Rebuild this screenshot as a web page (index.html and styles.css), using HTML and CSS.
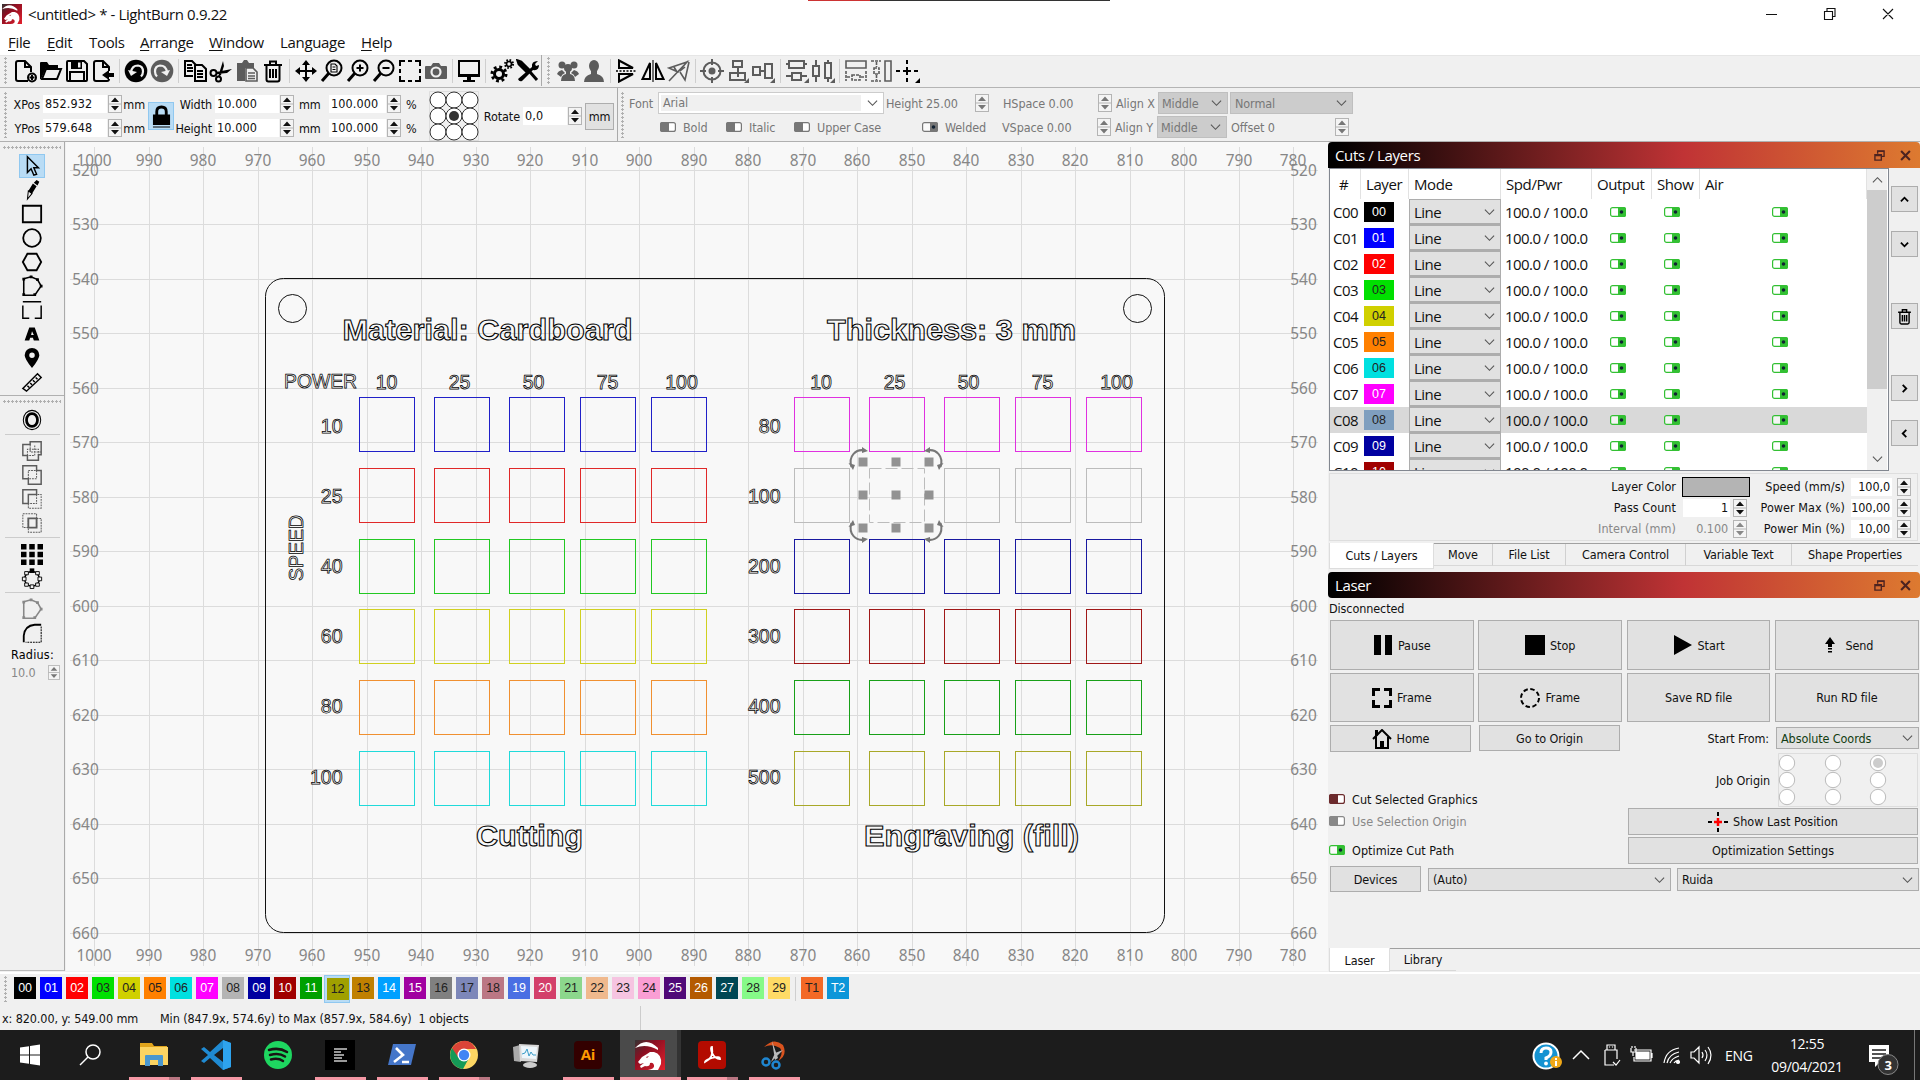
FILE: index.html
```html
<!DOCTYPE html>
<html lang="en">
<head>
<meta charset="utf-8">
<title>LightBurn</title>
<link rel="stylesheet" href="styles.css">
</head>
<body>
<svg class="sprite" aria-hidden="true">
  <defs>
    <symbol id="spin" viewBox="0 0 14 18"><rect x=".5" y=".5" width="13" height="17" fill="#f4f4f4" stroke="#b4b4b4"/><path d="M0 9h14" stroke="#b4b4b4"/><path d="M3 7l4-4.6L11 7zM3 11l4 4.600L11 11z" fill="currentColor"/></symbol>
    <symbol id="chev" viewBox="0 0 12 8"><path d="M1 1.500l5 5 5-5" fill="none" stroke="#555" stroke-width="1.200"/></symbol>
    <symbol id="on" viewBox="0 0 16 10"><rect x=".6" y=".6" width="14.800" height="8.800" rx="2" fill="#fff" fill-opacity=".7" stroke="currentColor" stroke-width="1.200"/><path d="M8 0h6a2 2 0 012 2v6a2 2 0 01-2 2H8z" fill="currentColor"/><circle cx="11.500" cy="5" r="1.800" fill="#123"/></symbol>
    <symbol id="off" viewBox="0 0 16 10"><rect x=".6" y=".6" width="14.800" height="8.800" rx="2" fill="#fff" stroke="currentColor" stroke-width="1.200"/><path d="M9 0H2a2 2 0 00-2 2v6a2 2 0 002 2h7z" fill="currentColor"/></symbol>
    <symbol id="trash" viewBox="0 0 24 24"><path d="M3 6h18M9 5V2.500h6V5M5.500 7v13.500q0 2 2 2h9q2 0 2-2V7M9 10v9M12 10v9M15 10v9" fill="none" stroke="currentColor" stroke-width="2"/></symbol>
    <symbol id="float" viewBox="0 0 12 12"><path d="M4 4V1h7v6H8" fill="none" stroke="currentColor" stroke-width="1.500"/><path d="M1 5h7v6H1zM1 6h7M4 1.500h7" fill="none" stroke="currentColor" stroke-width="1.500"/></symbol>
    <symbol id="x" viewBox="0 0 10 10"><path d="M1 1l8 8M9 1L1 9" stroke="currentColor" stroke-width="1.900"/></symbol>
    <symbol id="poly" viewBox="0 0 24 24"><path d="M3 4l8-2 7 3 4 7-7 10H3z" fill="none" stroke="currentColor" stroke-width="1.700"/><path d="M1.500 3h3v3h-3zM9.500 .5h3v3h-3zM16.500 3.500h3v3h-3zM20.500 10.500h3v3h-3zM13.500 20h3v3h-3zM1.500 20h3v3h-3z" fill="currentColor"/></symbol>
    <symbol id="dragon" viewBox="0 0 30 30"><path d="M0 0h30v30H0z" fill="url(#dg)"/><path d="M0 8Q11-4 23 8v2Q11 3 0 8z" fill="#fff"/><path d="M3 22l4-5 5-3 3-2 4 0q8 2 7 12l-3 6H13q7-1 6-5-1-3-4-2 0 4-5 3l-4 2-1-2 4-3-4 1z" fill="#fff"/><path d="M11 17l3-1-2 2z" fill="#a01020"/></symbol>
    <symbol id="undo" viewBox="0 0 24 24"><circle cx="12" cy="12" r="11.300" fill="currentColor"/><path d="M4 11l3 6 6-4z" fill="#f0f0f0"/><path d="M7 13q1-6.500 7-6.500 5 .5 5 6 0 3-2 5" fill="none" stroke="#f0f0f0" stroke-width="2.200"/></symbol>
    <linearGradient id="dg" x2="1" y2="1"><stop stop-color="#333"/><stop offset=".35" stop-color="#8a0f22"/><stop offset="1" stop-color="#e3202c"/></linearGradient>
  </defs>
</svg>

<header class="titlebar">
  <svg class="logo"><use href="#dragon"/></svg>
  <span class="caption">&lt;untitled&gt; * - LightBurn 0.9.22</span>
  <i class="top-strip"></i>
  <svg class="winbtns" viewBox="0 0 180 28" fill="none" stroke="#111" stroke-width="1.100"><path d="M26 14.500h11M84.500 11.500h8v8h-8zM87 11V8.500h8v8h-2.500M143 9l10 10M153 9l-10 10"/></svg>
</header>
<nav class="menubar"><span class="m1"><u>F</u>ile</span><span class="m2"><u>E</u>dit</span><span class="m3">Tools</span><span class="m4"><u>A</u>rrange</span><span class="m5"><u>W</u>indow</span><span class="m6">Language</span><span><u>H</u>elp</span></nav>

<div class="toolbar">
  <i class="grip"></i>
  <svg viewBox="0 0 24 24"><path d="M15 22H5q-2 0-2-2V4q0-2 2-2h7l6 6v5M12 2v6h6" class="s"/><circle cx="19" cy="18.500" r="4" class="s"/><path d="M19 16v5M16.500 18.500h5" class="s"/></svg>
  <svg viewBox="0 0 24 24"><path d="M1 20V4q0-1 1-1h6l2 3h9v3H7L2 20z"/><path d="M7 10h15l-4 10H3z" class="s"/></svg>
  <svg viewBox="0 0 24 24"><path d="M3 2h16l3 3v16q0 1-1 1H3q-1 0-1-1V3q0-1 1-1z" class="s"/><path d="M6 2h11v8H6z"/><path d="M13 3.500h2.500v5H13z" fill="#eee"/><path d="M5 22v-9h14v9" class="s"/></svg>
  <svg viewBox="0 0 24 24"><path d="M18 12V8l-6-6H5Q3 2 3 4v16q0 2 2 2h11q2 0 2-2M12 2v6h6" class="s"/><path d="M11 16l7-5v3h5v4h-5v3z"/></svg>
  <i class="sep"></i>
  <svg><use href="#undo"/></svg>
  <svg class="dim flip"><use href="#undo"/></svg>
  <i class="sep"></i>
  <svg viewBox="0 0 24 24"><path d="M10 17H2V2h7l4 4M12 6h7l4 4v12H12zM4 6h5M4 9h6M4 12h6M14 12h6M14 15h6M14 18h6" class="s"/></svg>
  <svg viewBox="0 0 24 24"><circle cx="4.500" cy="14" r="3" class="s"/><circle cx="9.500" cy="20" r="2.500" class="s"/><path d="M7 13l16-3-5 4-10 1zM9 18l5-16 1 5-3 9z"/></svg>
  <svg viewBox="0 0 24 24" class="dim"><path d="M2 4h5l2-3h3l2 3h5v5h-9v13H2z"/><path d="M11 9h7l4 4v9H11zM13 14h7M13 17h7M13 19.500h7" class="s t2"/></svg>
  <svg><use href="#trash"/></svg>
  <i class="sep"></i>
  <svg viewBox="0 0 24 24"><path d="M12 1l4 5h-3v5h5V8l5 4-5 4v-3h-5v5h3l-4 5-4-5h3v-5H6v3l-5-4 5-4v3h5V6H8z"/></svg>
  <svg viewBox="0 0 24 24"><circle cx="14" cy="9" r="7.500" class="s"/><path d="M9 14l-7 8" class="s b"/><path d="M11 5h4l2 2v6h-6zM12.500 8h3M12.500 10.500h3" class="s t"/></svg>
  <svg viewBox="0 0 24 24"><circle cx="14" cy="9" r="7.500" class="s"/><path d="M9 14l-7 8" class="s b"/><path d="M14 5.500v7M10.500 9h7" class="s"/></svg>
  <svg viewBox="0 0 24 24"><circle cx="14" cy="9" r="7.500" class="s"/><path d="M9 14l-7 8" class="s b"/><path d="M10.500 9h7" class="s"/></svg>
  <svg viewBox="0 0 24 24"><path d="M2 7V2h5M10 2h4M17 2h5v5M22 10v4M22 17v5h-5M14 22h-4M7 22H2v-5M2 14v-4" class="s"/></svg>
  <svg viewBox="0 0 24 24" class="dim"><path d="M2 7h5l2-3h6l2 3h5q1 0 1 1v11q0 1-1 1H2q-1 0-1-1V8q0-1 1-1z"/><circle cx="12" cy="13" r="4.500" class="s w"/></svg>
  <i class="sep"></i>
  <svg viewBox="0 0 24 24"><path d="M2 2h20v15H2z" class="s"/><path d="M2 15h20v2H2zM10 17h4v4h4v2H6v-2h4z"/></svg>
  <i class="sep"></i>
  <svg viewBox="0 0 24 24"><circle cx="9" cy="15" r="4.500" class="s b"/><circle cx="9" cy="15" r="7" class="s b" stroke-dasharray="2.800 2.700"/><circle cx="19" cy="5" r="2.500" class="s t2"/><circle cx="19" cy="5" r="4" class="s" stroke-dasharray="1.600 1.550"/></svg>
  <svg viewBox="0 0 24 24"><path d="M2 2l3 1 8 8-2 2-8-8zM14 13l7 8" class="s b"/><path d="M16 8q-1-6 6-6l-3 3 1 2 3-1q0 6-6 5L6 22q-3 1-4-2z"/></svg>
  <i class="split"></i><i class="grip"></i>
  <svg viewBox="0 0 24 24" class="dim"><circle cx="6" cy="6" r="3.500"/><circle cx="18" cy="6" r="3.500"/><circle cx="12" cy="9" r="4"/><path d="M1 15q1-3 5-4l3 3q-3 1-4 4zM23 15q-1-3-5-4l-3 3q3 1 4 4zM5 22q0-6 5-7v-3h4v3q5 1 5 7z"/></svg>
  <svg viewBox="0 0 24 24" class="dim"><ellipse cx="12" cy="7" rx="5" ry="6"/><path d="M2 23q0-6 7-8v-4h6v4q7 2 7 8z"/></svg>
  <i class="sep"></i>
  <svg viewBox="0 0 24 24"><path d="M4 1.500L18 9H4zM4 22.500L18 15H4z" class="s"/><path d="M1 12h20" class="s t2" stroke-dasharray="2 1.500"/></svg>
  <svg viewBox="0 0 24 24"><path d="M9 4v16H1.500zM15 4v16h7.500z" class="s"/><path d="M12 1v22" class="s t"/></svg>
  <svg viewBox="0 0 24 24" class="dim"><path d="M2 9l18-6-9 10zM22 3l-4 18-5-8M2 22L21 2M7 8l3 5M18 8l-5 4" class="s t2"/></svg>
  <i class="sep"></i>
  <svg viewBox="0 0 24 24" class="dim"><circle cx="12" cy="12" r="8.500" class="s"/><circle cx="12" cy="12" r="3.500"/><path d="M12 0v6M12 18v6M0 12h6M18 12h6" class="s"/></svg>
  <svg viewBox="0 0 24 24" class="dim"><path d="M7 2h9v6H7zM12 8v6M4 14h15v7H4zM12 10v8" class="s"/><path d="M23 19v5h-5z"/></svg>
  <svg viewBox="0 0 24 24" class="dim"><path d="M1 8h7v8H1zM8 12h5M13 5h7v14h-7z" class="s"/><path d="M23 19v5h-5z"/></svg>
  <i class="sep"></i>
  <svg viewBox="0 0 24 24" class="dim"><path d="M4 2h15v7H4zM1 5h3M19 5h3M7 14h9v7H7zM1 17h6M16 17h6" class="s"/><path d="M24 19v5h-5z"/></svg>
  <svg viewBox="0 0 24 24" class="dim"><path d="M2 7h6v10H2zM5 1v6M5 17v6M14 4h6v15h-6zM17 1v3M17 19v4" class="s"/><path d="M24 19v5h-5z"/></svg>
  <i class="sep"></i>
  <svg viewBox="0 0 24 24" class="dim"><path d="M2 2h20v7H2z" class="s t2"/><path d="M2 12v10M22 12v10M8 16h8v5H8zM3 18h4M17 18h4" class="s t2" stroke-dasharray="3 1"/></svg>
  <svg viewBox="0 0 24 24" class="dim"><path d="M15 2h6v20h-6z" class="s t2"/><path d="M1 2h10M1 22h10M4 9h5v6H4zM6.500 3v5M6.500 16v5" class="s t2" stroke-dasharray="3 1"/></svg>
  <svg viewBox="0 0 24 24"><path d="M11 1v4M11 8v8M11 19v4M0 12h4M7 12h8M18 12h4" class="s"/><path d="M24 19v5h-5z"/></svg>
</div>

<div class="propbar">
  <i class="grip"></i>
  <div class="posgrid">
    <label>XPos</label><b class="in">852.932</b><svg class="spin"><use href="#spin"/></svg><label>mm</label>
    <span class="lock"><svg viewBox="0 0 20 24"><path d="M1 10h18v11H1zM1 22.500h18v1H1z"/><path d="M5 11V7q0-5 5-5t5 5v4" class="s b"/></svg></span>
    <label>Width</label><b class="in">10.000</b><svg class="spin"><use href="#spin"/></svg><label class="l">mm</label><b class="in">100.000</b><svg class="spin"><use href="#spin"/></svg><label class="l">%</label>
    <svg class="anchor" viewBox="0 0 50 50"><path d="M.5 .5h49v49H.5z" fill="none" stroke="#ddd"/><g fill="#fff" stroke="#333"><circle cx="9" cy="9" r="8"/><circle cx="25" cy="9" r="8"/><circle cx="41" cy="9" r="8"/><circle cx="9" cy="25" r="8"/><circle cx="25" cy="25" r="8"/><circle cx="41" cy="25" r="8"/><circle cx="9" cy="41" r="8"/><circle cx="25" cy="41" r="8"/><circle cx="41" cy="41" r="8"/></g><circle cx="25" cy="25" r="5" fill="#333"/></svg>
    <label class="tall k14">Rotate</label><b class="in tall k15">0,0</b><svg class="spin tall k16"><use href="#spin"/></svg><button class="tall k17">mm</button>
    <label>YPos</label><b class="in">579.648</b><svg class="spin"><use href="#spin"/></svg><label>mm</label>
    <label>Height</label><b class="in">10.000</b><svg class="spin"><use href="#spin"/></svg><label class="l">mm</label><b class="in">100.000</b><svg class="spin"><use href="#spin"/></svg><label class="l">%</label>
  </div>
  <div class="fontbar">
    <i class="grip"></i>
    <div class="frows">
      <div class="frow"><span class="f-font">Font</span><span class="combo font"><em>Arial</em><svg class="chev"><use href="#chev"/></svg></span><span class="f-h">Height 25.00</span><svg class="spin"><use href="#spin"/></svg><span class="f-s">HSpace 0.00</span><svg class="spin"><use href="#spin"/></svg><span class="f-a">Align X</span><span class="combo mid">Middle<svg class="chev"><use href="#chev"/></svg></span><span class="combo norm">Normal<svg class="chev"><use href="#chev"/></svg></span></div>
      <div class="frow"><span class="c1"><svg class="tg"><use href="#off"/></svg>Bold</span><span class="c2"><svg class="tg"><use href="#off"/></svg>Italic</span><span class="c3"><svg class="tg"><use href="#off"/></svg>Upper Case</span><span class="c4"><svg class="tg"><use href="#on"/></svg>Welded</span><span class="f-s v">VSpace 0.00</span><svg class="spin"><use href="#spin"/></svg><span class="f-a">Align Y</span><span class="combo mid">Middle<svg class="chev"><use href="#chev"/></svg></span><span class="f-o">Offset 0</span><svg class="spin"><use href="#spin"/></svg></div>
    </div>
  </div>
</div>

<main class="work">
  <aside class="tools">
    <i class="hgrip"></i>
    <svg class="sel" viewBox="0 0 24 24"><path d="M7 2v17l4-4 3 7 3-1-3-7h5z" class="s t2"/></svg>
    <svg viewBox="0 0 24 24"><path d="M14 4l3-3 3 2-2 4zM13 5l4 3-5 8-4-3z"/><path d="M8 13l4 3-5 6z" class="s t"/></svg>
    <svg viewBox="0 0 24 24"><path d="M2 3h20v18H2z" class="s"/></svg>
    <svg viewBox="0 0 24 24"><circle cx="12" cy="12" r="9.600" class="s"/></svg>
    <svg viewBox="0 0 24 24"><path d="M7 3h10l5 9-5 9H7l-5-9z" class="s"/></svg>
    <svg><use href="#poly"/></svg>
    <svg viewBox="0 0 24 24"><path d="M2 3h20M2 7v14h7M22 7v14h-7" class="s t2"/></svg>
    <svg viewBox="0 0 24 24"><path fill-rule="evenodd" d="M9 5h6l5 14h-6l-1-3h-3l-1 3H4zM12 9l-1 4h3z"/></svg>
    <svg viewBox="0 0 24 24"><path fill-rule="evenodd" d="M12 23Q4 13 4 9a8 8 0 0116 0Q20 13 12 23zM12 6a3 3 0 100 6 3 3 0 000-6z"/></svg>
    <svg viewBox="0 0 24 24"><path d="M2 19L18 3l4 4L6 22zM7 16l2 2M10 13l2 2M13 10l2 2M16 7l2 2" class="s t2"/></svg>
    <i class="hline"></i><i class="hgrip"></i>
    <svg class="o" viewBox="0 0 24 24"><ellipse cx="12" cy="12" rx="9.500" ry="10.500" class="s t"/><ellipse cx="12" cy="12" rx="6" ry="7" class="s b"/></svg>
    <i class="hsep"></i>
    <svg class="dim" viewBox="0 0 24 24"><path d="M2 5h8V2h12v14h-3v6H7v-5H2z" class="s t2"/><path d="M10 5v8h12M7 17v-7h12v12M3 17h12V5" class="s t" stroke-dasharray="2 1"/></svg>
    <svg class="dim" viewBox="0 0 24 24"><path d="M2 2h15v5h5v15H8v-6H2z" class="s t2"/><path d="M8 16V7h9v9z" class="s t" stroke-dasharray="2 1"/></svg>
    <svg class="dim" viewBox="0 0 24 24"><path d="M2 2h15v5H8v10H2z" class="s t2"/><path d="M8 17v5h14V7h-5v10H8" class="s t" stroke-dasharray="2 1"/></svg>
    <svg class="dim" viewBox="0 0 24 24"><path d="M8 7h9v10H8z" class="s"/><path d="M2 2h15v15H2zM8 7h14v15H8z" class="s t" stroke-dasharray="2 1"/></svg>
    <i class="hsep"></i>
    <svg viewBox="0 0 24 24"><path d="M0 1h6v6H0zM9 1h6v6H9zM18 1h6v6h-6zM0 9.500h6v6H0zM9 9.500h6v6H9zM18 9.500h6v6h-6zM0 18h6v6H0zM9 18h6v6H9zM18 18h6v6h-6z"/></svg>
    <svg viewBox="0 0 24 24"><circle cx="12" cy="13" r="8" class="s t2"/><g fill="#f0f0f0" stroke="#000"><path d="M18.500 11h4v4h-4zM1.500 11h4v4h-4zM10 19.500h4v4h-4zM4 5h4v3.500H4zM16 5h4v3.500h-4zM4 17.500h4V21H4zM16 17.500h4V21h-4z"/></g><path d="M9.500 1.500h5v5h-5z"/></svg>
    <i class="hsep"></i>
    <svg class="dim2"><use href="#poly"/></svg>
    <svg viewBox="0 0 24 24"><path d="M3 22v-7Q4 4 15 3h7" class="s"/><path d="M22 5v17H5" class="s t" stroke-dasharray="2 1"/></svg>
    <span class="radius">Radius:</span>
    <div class="radval"><span>10.0</span><svg class="spin"><use href="#spin"/></svg></div>
  </aside>

  <section class="canvas"><svg id="stage" viewBox="66 142 1262 829"></svg></section>

  <section class="docks">
    <div class="dockhead"><span>Cuts / Layers</span><svg><use href="#float"/></svg><svg class="cx"><use href="#x"/></svg></div>
    <div class="cuts">
      <div class="tablebox">
        <div class="table" id="layers">
          <div class="thead"><span class="hash">#</span><span>Layer</span><span>Mode</span><span>Spd/Pwr</span><span>Output</span><span>Show</span><span>Air</span></div>
        </div>
        <div class="scroll"><svg class="chev up"><use href="#chev"/></svg><i></i><svg class="chev"><use href="#chev"/></svg></div>
      </div>
      <div class="sidebtns">
        <button><svg viewBox="0 0 10 10"><path d="M1 7l4-4 4 4" class="s"/></svg></button>
        <button><svg viewBox="0 0 10 10"><path d="M1 3l4 4 4-4" class="s"/></svg></button>
        <button class="tr"><svg><use href="#trash"/></svg></button>
        <button><svg viewBox="0 0 10 10"><path d="M3 1l4 4-4 4" class="s"/></svg></button>
        <button><svg viewBox="0 0 10 10"><path d="M7 1L3 5l4 4" class="s"/></svg></button>
      </div>
    </div>
    <div class="params">
      <label>Layer Color</label><i class="colour"></i><label>Speed (mm/s)</label><b class="in">100,0</b><svg class="spin"><use href="#spin"/></svg>
      <label>Pass Count</label><span class="pc"><b class="in">1</b><svg class="spin"><use href="#spin"/></svg></span><label>Power Max (%)</label><b class="in">100,00</b><svg class="spin"><use href="#spin"/></svg>
      <label class="off">Interval (mm)</label><span class="pc off"><b class="in">0.100</b><svg class="spin"><use href="#spin"/></svg></span><label>Power Min (%)</label><b class="in">10,00</b><svg class="spin"><use href="#spin"/></svg>
    </div>
    <div class="tabs top"><span class="act">Cuts / Layers</span><span>Move</span><span>File List</span><span>Camera Control</span><span>Variable Text</span><span>Shape Properties</span></div>
    <div class="dockhead second"><span>Laser</span><svg><use href="#float"/></svg><svg class="cx"><use href="#x"/></svg></div>
    <div class="status">Disconnected</div>
    <div class="big">
      <button><svg viewBox="0 0 20 20"><path d="M1 0h7v20H1zM12 0h7v20h-7z"/></svg>Pause</button>
      <button><svg viewBox="0 0 20 20"><path d="M0 0h20v20H0z"/></svg>Stop</button>
      <button><svg viewBox="0 0 20 20"><path d="M1 0l18 10L1 20z"/></svg>Start</button>
      <button><svg viewBox="0 0 20 20"><path d="M10 2l5 7h-3v3H8V9H5zM8 13h4v1.500H8zM8 16h4v1.500H8z"/></svg>Send</button>
      <button><svg viewBox="0 0 20 20"><path d="M1.500 8V1.500H8M12 1.500h6.500V8M18.500 12v6.500H12M8 18.500H1.500V12" class="s b"/></svg>Frame</button>
      <button><svg viewBox="0 0 20 20"><circle cx="10" cy="10" r="9" class="s" stroke-dasharray="4.500 2.570"/></svg>Frame</button>
      <button>Save RD file</button><button>Run RD file</button>
    </div>
    <div class="homerow"><button><svg viewBox="0 0 20 20"><path d="M1 10l9-9 9 9M4 8v11h12V8" class="s"/><path d="M8 19v-7h4v7zM3 1h3v5l-3 3z"/></svg>Home</button><button class="go">Go to Origin</button><label>Start From:</label><span class="combo abs">Absolute Coords<svg class="chev"><use href="#chev"/></svg></span></div>
    <div class="lower">
      <div class="checks"><span><svg class="tg red"><use href="#off"/></svg>Cut Selected Graphics</span><span class="offc"><svg class="tg"><use href="#off"/></svg>Use Selection Origin</span><span class="oc"><svg class="tg green"><use href="#on"/></svg>Optimize Cut Path</span></div>
      <div class="rightcol">
        <div class="job"><label>Job Origin</label><svg viewBox="0 0 140 54"><path d="M.5 .5h139v53H.5z" fill="none" stroke="#ddd"/><g fill="#fff" stroke="#bbb"><circle cx="9" cy="10" r="7.700"/><circle cx="55" cy="10" r="7.700"/><circle cx="100" cy="10" r="7.700"/><circle cx="9" cy="27" r="7.700"/><circle cx="55" cy="27" r="7.700"/><circle cx="100" cy="27" r="7.700"/><circle cx="9" cy="44" r="7.700"/><circle cx="55" cy="44" r="7.700"/><circle cx="100" cy="44" r="7.700"/></g><circle cx="100" cy="10" r="5" fill="#ccc"/></svg></div>
        <button><svg viewBox="0 0 20 20"><path d="M10 0v4M10 16v4M0 10h4M16 10h4" class="s"/><path d="M10 6v8M6 10h8" stroke="#f00" stroke-width="2.500"/></svg>Show Last Position</button>
        <button class="opt">Optimization Settings</button>
      </div>
    </div>
    <div class="devrow"><button>Devices</button><span class="combo auto">(Auto)<svg class="chev"><use href="#chev"/></svg></span><span class="combo rui">Ruida<svg class="chev"><use href="#chev"/></svg></span></div>
    <div class="tabs bot"><span class="act">Laser</span><span>Library</span></div>
  </section>
</main>

<div class="palette" id="palette"><i class="grip"></i></div>
<footer class="statusbar"><span class="xy">x: 820.00, y: 549.00 mm</span><span class="mm">Min (847.9x, 574.6y) to Max (857.9x, 584.6y)&nbsp; 1 objects</span></footer>

<div class="taskbar">
  <span class="w60"><svg viewBox="0 0 30 30" fill="#fff"><path d="M5 7.500l9-1.300v8.300H5zM15 6l10-1.500v10H15zM5 15.500h9v8.300l-9-1.300zM15 15.500h10v10L15 24z"/></svg></span>
  <span class="w60 gap"><svg viewBox="0 0 30 30" fill="none" stroke="#fff" stroke-width="1.500"><circle cx="18" cy="12" r="7"/><path d="M13 17l-8 8"/></svg></span>
  <span class="run two"><svg viewBox="0 0 30 30"><path d="M1 3h12l2 3h13v19H1z" fill="#e0a41c"/><path d="M1 7h28v18H1z" fill="#fcd462"/><path d="M6 26V16q0-1 1-1h16q1 0 1 1v10h-5v-6h-8v6z" fill="#4a97cf"/></svg></span>
  <span class="run"><svg viewBox="0 0 30 30"><path d="M22 0l8 3v24l-8 3L9 18l-6 5-3-2 7-6-7-6 3-2 6 5zM22 8l-9 7 9 7z" fill="#1f8ad2" fill-rule="evenodd"/><path d="M22 0l8 3v24l-8 3z" fill="#2ea3ee"/></svg></span>
  <span><svg viewBox="0 0 30 30"><circle cx="15" cy="15" r="14" fill="#1ed760"/><path d="M6 10q10-3 18 2M7 15q9-2.500 15 1.500M8 19.500q7-2 12 1.500" fill="none" stroke="#191414" stroke-width="2.500" stroke-linecap="round"/></svg></span>
  <span class="run"><svg viewBox="0 0 30 30"><path d="M0 0h30v30H0z" fill="#000"/><path d="M9 9h13M9 12h7M9 15h10M9 18h8M9 21h13" stroke="#ccc" stroke-width="1.500"/></svg></span>
  <span class="run"><svg viewBox="0 0 30 30"><path d="M6 4h23l-5 21H1z" fill="#4576c9"/><path d="M9 8l7 7-9 7M15 22h7" fill="none" stroke="#fff" stroke-width="2.600"/></svg></span>
  <span class="run two"><svg viewBox="0 0 30 30"><circle cx="15" cy="15" r="14" fill="#fdd663"/><path d="M3 8a14 14 0 0011 21l6-11z" fill="#159a57"/><path d="M3 8l6 9 5-8h13Q22-1 13 1 6 3 3 8z" fill="#db4437"/><circle cx="15" cy="15" r="6.500" fill="#fff"/><circle cx="15" cy="15" r="5.200" fill="#4285f4"/></svg></span>
  <span><svg viewBox="0 0 30 30"><path d="M2 7l7-2 1 17-7-1z" fill="#aaa"/><path d="M8 4l20 1-2 17-17-1z" fill="#d8d8d8"/><path d="M10 6l16 1-1 12-14-1z" fill="#eef6fb"/><path d="M11 14l3-1 2-4 2 7 2-4 2 3h3" fill="none" stroke="#3a9cc8"/><ellipse cx="19" cy="25" rx="7" ry="3" fill="#ccc"/></svg></span>
  <span class="run"><svg viewBox="0 0 30 30"><rect x="1" y="1" width="28" height="28" rx="4" fill="#330000"/><text x="15" y="20" class="ai">Ai</text></svg></span>
  <span class="run live"><svg><use href="#dragon"/></svg></span>
  <span class="run two"><svg viewBox="0 0 30 30"><rect x="1" y="1" width="28" height="28" rx="4" fill="#b30b00"/><path d="M8 22q9-4 7-15-2 0 0 6 3 6 8 6 0-3-8-1-7 2-7 4z" fill="none" stroke="#fff" stroke-width="1.800"/></svg></span>
  <span class="run"><svg viewBox="0 0 30 30"><path d="M5 7Q15-3 24 5q5 10-5 16 6-8 2-13Q13 3 5 7z" fill="#d9531e"/><path d="M13 1l6 17-3 2zM24 10L12 22l4-9z" fill="#bbb"/><circle cx="7" cy="22" r="3.500" fill="none" stroke="#1f86d0" stroke-width="2.500"/><circle cx="17" cy="25" r="3.500" fill="none" stroke="#1f86d0" stroke-width="2.500"/></svg></span>
  <div class="tray">
    <svg class="icons" viewBox="0 0 190 50" fill="none" stroke="#fff" stroke-width="1.200"><circle cx="17" cy="26" r="12.500" fill="#1593d2" stroke-width="2"/><path d="M12 23q0-5 5-5t5 4-5 6v2" stroke-width="3"/><circle cx="17" cy="33.500" r="1.900" fill="#fff" stroke="none"/><circle cx="27" cy="32" r="6" fill="#f0a818" stroke="none"/><path d="M27 31v5M27 28v2" stroke-width="2"/><path d="M44 29l8-8 8 8" stroke-width="1.500"/><path d="M78 20h8v-5h-8zM76 20h12v9M76 20v15h9M84 32l3 3 4-5M80.500 16.500v1M83.500 16.500v1"/><path d="M105 20h17v11h-17v-4M123 23v5" /><path d="M107 22h13v7h-13z" fill="#fff"/><path d="M102 18v4h5v-4M104 22v4M103 16v2M106 16v2"/><path d="M135 33Q137 20 150 18M138 33Q140 24 150 22M141 33Q143 28 150 26M145 33Q146 31 150 30"/><circle cx="149" cy="32" r="1.500" fill="#fff"/><path d="M162 22h3l5-5v16l-5-5h-3zM173 22q2 3 0 6M176 20q4 5 0 11M179 17q6 8 0 17"/></svg>
    <span class="eng">ENG</span>
    <span class="clock"><span>12:55</span><span>09/04/2021</span></span>
    <svg class="note" viewBox="0 0 50 50"><path d="M12 15h20v17h-9l-5 5v-5h-6z" fill="#fff"/><path d="M15 20h14M15 24h14M15 28h9" stroke="#1c1c1c" stroke-width="1.300"/><circle cx="31" cy="34.500" r="10" fill="#333" stroke="#888"/><text x="31" y="39.500">3</text></svg>
  </div>
</div>
<script src="script.js"></script>
</body>
</html>
```
FILE: styles.css
```css
* { box-sizing: border-box; }
body { margin: 0; width: 1920px; height: 1080px; overflow: hidden; background: #f0f0f0; color: #111; font: 12.5px "DejaVu Sans Condensed", "DejaVu Sans", sans-serif; font-stretch: condensed; letter-spacing: -.1px; display: flex; flex-direction: column; }
svg { display: block; flex: none; }
svg:not([fill]) { fill: currentColor; }
label, span, b, em { white-space: nowrap; }
b, em { font-weight: normal; font-style: normal; }
i { display: block; flex: none; }
.sprite { position: absolute; width: 0; height: 0; }
.s { fill: none; stroke: currentColor; stroke-width: 2; }
.s.b { stroke-width: 3; }
.s.t { stroke-width: 1.1; }
.s.t2 { stroke-width: 1.6; }
.s.w { stroke: #f0f0f0; stroke-width: 2.2; }
.dim { color: #5c5c5c; }
.dim2 { color: #888; }
.flip { transform: scaleX(-1); }
button { font: inherit; letter-spacing: inherit; color: inherit; background: #e1e1e1; border: 1px solid #adadad; padding: 0; display: flex; align-items: center; justify-content: center; gap: 5px; white-space: nowrap; }

.titlebar { flex: none; height: 28px; background: #fff; display: flex; align-items: center; font: 15px "Open Sans", sans-serif; letter-spacing: -.38px; position: relative; }
.logo { width: 20px; height: 20px; margin: 0 6px 0 2px; }
.winbtns { width: 180px; height: 28px; margin-left: auto; }
.top-strip { position: absolute; left: 808px; top: 0; width: 302px; height: 1px; background: linear-gradient(90deg, #c33 0 62px, #333 62px); }
.menubar { flex: none; height: 27px; background: #fff; display: flex; align-items: center; padding: 0 0 0 8px; font: 15px "Open Sans", sans-serif; letter-spacing: -.32px; }
.menubar u { text-underline-offset: 2px; }
.m1 { width: 39px; } .m2 { width: 42px; } .m3 { width: 51px; } .m4 { width: 69px; } .m5 { width: 71px; } .m6 { width: 81px; }

.toolbar { flex: none; height: 33px; display: flex; align-items: center; border-bottom: 1px solid #b4b4b4; border-top: 1px solid #e6e6e6; color: #000; padding-bottom: 2px; }
.toolbar > svg { width: 24px; height: 24px; margin: 0 1px; }
.grip { width: 3px; height: 28px; margin: 0 5px 0 4px; background: radial-gradient(circle at 1.5px 1.5px, #b0b0b0 1px, transparent 1.3px) 0 0 / 3px 4px; }
.sep { width: 1px; height: 24px; margin: 0 3px; background: #cfcfcf; }
.split { width: 1px; height: 31px; background: #aaa; margin: 0 1px 0 0; }

.propbar { flex: none; height: 54px; display: flex; align-items: center; border-bottom: 1px solid #b0b0b0; }
.propbar .grip { height: 46px; }
.posgrid { display: grid; grid-template-columns: 31px 65px 15px 25px 26px 41px 65px 15px 34px 58px 15px 27px 50px 44px 45px 16px 30px; grid-template-rows: 24px 24px; align-items: center; width: 605px; margin-top: 3px; }
.posgrid > label { text-align: right; padding-right: 3px; }
.posgrid > label.l { text-align: left; padding-left: 4px; }
.in { background: #fff; height: 18px; line-height: 18px; padding-left: 3px; margin-right: 1px; }
.posgrid > .in { letter-spacing: .1px; padding-left: 2px; }
.spin { width: 14px; height: 18px; }
.lock, .anchor, .tall { grid-row: 1 / 3; }
.lock { grid-column: 5; background: #b9dcf5; border: 1px solid #90c8f0; height: 28px; display: grid; place-items: center; color: #000; }
.lock svg { width: 19px; height: 23px; }
.anchor { width: 50px; height: 50px; grid-column: 13; }
.k14 { grid-column: 14; } .k15 { grid-column: 15; } .k16 { grid-column: 16; } .k17 { grid-column: 17; }
button.tall { height: 27px; margin-left: 1px; }

.fontbar { display: flex; align-items: center; border-left: 1px solid #aaa; height: 53px; color: #777; }
.fontbar .grip { margin: 0 5px 0 3px; }
.frows { padding-top: 1px; }
.frow { height: 24px; display: flex; align-items: center; }
.f-font { width: 29px; } .f-h { width: 89px; } .f-s { width: 95px; margin-left: 14px; } .f-a { width: 42px; margin-left: 4px; }
.f-o { width: 104px; margin-left: 2px; }
.f-s.v { margin-left: 10px; }
.combo { background: #e1e1e1; border: 1px solid #adadad; height: 22px; display: flex; align-items: center; justify-content: space-between; padding: 0 5px 0 4px; }
.chev { width: 11px; height: 8px; }
.combo.font { width: 226px; background: #fff; border-color: #ccc; margin-right: 2px; }
.combo.font em { background: #f0f0f0; width: 200px; height: 16px; line-height: 16px; margin-left: -2px; padding-left: 2px; }
.combo.mid { width: 70px; background: #ccc; border-color: #bfbfbf; margin-right: 2px; padding-left: 3px; }
.combo.norm { width: 123px; background: #ccc; border-color: #bfbfbf; }
.frow > [class^="c"]:not(.combo) { display: flex; align-items: center; }
.c1 { margin-left: 31px; width: 66px; } .c2 { width: 68px; } .c3 { width: 128px; } .c4 { width: 70px; }
.tg { width: 16px; height: 10px; margin-right: 7px; }
.tg.red { color: #6b2a2c; } .tg.green { color: #33c033; }

.work { flex: none; height: 830px; display: flex; }
.tools { width: 65px; border-right: 1px solid #aaa; display: flex; flex-direction: column; align-items: center; color: #000; padding-top: 3px; border-bottom: 1px solid #bbb; margin-right: 1px; height: 829px; }
.tools > svg { width: 22px; height: 22px; margin: 1px 0; }
.tools > .sel { width: 26px; height: 24px; background: #b9dcf5; border: 1px solid #90c8f0; margin: 0; }
.hgrip { width: 58px; height: 3px; margin: 1px 0 5px; background: radial-gradient(circle at 1.5px 1.5px, #b0b0b0 1px, transparent 1.3px) 0 0 / 4px 3px; }
.hline { width: 64px; height: 1px; background: #b0b0b0; margin: 1px 0 3px; }
.hsep { width: 55px; height: 1px; background: #ccc; margin: 2px 0 4px; }
.radius { align-self: flex-start; margin: 2px 0 0 11px; letter-spacing: .2px; }
.radval { align-self: stretch; display: flex; align-items: center; padding: 3px 3px 0 11px; justify-content: space-between; color: #888; }
.radval .spin { height: 15px; color: #777; }
.canvas { width: 1262px; background: #f8f8f8; height: 829px; }
.canvas svg { width: 1262px; height: 829px; fill: none; }
.gl { stroke: #dcdcdc; fill: none; }
.rul { font: 15.4px "Noto Sans", sans-serif; fill: #868686; text-anchor: middle; letter-spacing: 0; }
.outl { font-family: "Liberation Sans", Arial, sans-serif; font-stretch: normal; fill: none; stroke: #000; stroke-width: .75; letter-spacing: 0; }
.outl.h { font-weight: bold; font-size: 30px; stroke-width: 1.05; }
.outl.n { font-size: 19.5px; }

.docks { width: 592px; display: flex; flex-direction: column; padding-left: 1px; }
.dockhead { flex: none; height: 26px; margin-left: -1px; border-radius: 4px 4px 0 0; background: linear-gradient(90deg, #000 1%, #c03335 60%, #dd7a30); color: #fff; display: flex; align-items: center; padding: 0 9px 0 7px; font: 15px "Open Sans", sans-serif; letter-spacing: -.35px; }
.dockhead svg { width: 11px; height: 11px; color: #4d2320; }
.dockhead span { margin-right: auto; }
.dockhead .cx { margin-left: 15px; }
.dockhead.second { margin-top: 5px; border-radius: 4px; }
.cuts { display: flex; height: 303px; flex: none; }
.tablebox { width: 560px; border: 1px solid #828790; background: #fff; display: flex; overflow: hidden; }
.table { width: 537px; font: 15px "Open Sans", sans-serif; letter-spacing: -.5px; color: #111; }
.thead, .lrow { display: grid; grid-template-columns: 31px 48px 92px 91px 60px 48px 167px; }
.thead { height: 30px; align-items: center; letter-spacing: -.4px; }
.thead span { height: 30px; line-height: 30px; border-right: 1px solid #e2e2e2; padding-left: 5px; }
.thead .hash { padding-left: 9px; }
.lrow { height: 26px; align-items: center; }
.lrow.cur { background: #d9d9d9; }
.lrow .id { padding-left: 3px; }
.lrow .sw { width: 30px; height: 20px; margin-left: 3px; font: 12.5px/20px "Liberation Sans", sans-serif; text-align: center; letter-spacing: 0; }
.lrow .combo { height: 26px; border-bottom-width: 2px; font-size: 15px; }
.lrow .sp { padding-left: 4px; letter-spacing: -.55px; }
.lrow .tg { color: #33c033; margin: 0 0 0 18px; }
.lrow .tg.s2 { margin-left: 12px; } .lrow .tg.s3 { margin-left: 72px; }
.scroll { width: 20px; background: #f0f0f0; display: flex; flex-direction: column; align-items: center; padding: 7px 0; }
.scroll i { width: 20px; height: 199px; background: #cdcdcd; margin: 6px 0 auto; }
.up { transform: rotate(180deg); }
.sidebtns { padding: 18px 0 0 2px; }
.sidebtns button { width: 27px; height: 26px; margin-bottom: 19px; color: #000; }
.sidebtns button:nth-child(2), .sidebtns .tr { margin-bottom: 46px; }
.sidebtns svg { width: 9px; height: 9px; }
.sidebtns .tr svg { width: 17px; height: 17px; }
.params { flex: none; height: 68px; margin: 2px 2px 0 0; border: 1px solid #dedede; display: grid; grid-template-columns: 346px 71px 98px 48px 16px; column-gap: 0; grid-template-rows: 21px 21px 21px; align-items: center; padding: 2px 0 0 0; }
.params label { text-align: right; letter-spacing: .05px; }
.pc { display: flex; justify-content: space-between; padding-left: 7px; }
.params .in { text-align: right; width: auto; padding: 0 2px 0 0; margin: 0 1px 0 6px; }
.params .pc .in { width: 47px; margin: 0; }
.off { color: #888; } .params .off .in { background: none; }
.colour { height: 20px; width: 68px; margin-left: 6px; background: #b4b4b4; border: 1px solid #000; }
.params > .spin { margin-left: 4px; }
.tabs { flex: none; display: flex; height: 24px; border-top: 1px solid #a0a0a0; }
.tabs.top { margin-top: 2px; }
.tabs span { border-right: 1px solid #d0d0d0; border-bottom: 1px solid #d8d8d8; text-align: center; line-height: 22px; height: 22px; }
.tabs .act { background: #fff; margin-top: -1px; height: 26px; line-height: 25px; border: 1px solid #ddd; border-top: 0; }
.tabs.top span:nth-child(1) { width: 105px; } .tabs.top span:nth-child(2) { width: 59px; } .tabs.top span:nth-child(3) { width: 73px; } .tabs.top span:nth-child(4) { width: 120px; } .tabs.top span:nth-child(5) { width: 106px; } .tabs.top span:nth-child(6) { width: 126px; border-right: 0; }
.status { height: 22px; line-height: 22px; flex: none; }
.big { flex: none; display: grid; grid-template-columns: repeat(4, 143.500px); column-gap: 4.900px; row-gap: 3px; grid-template-rows: 50px 49px; padding-left: 1px; }
.big svg, .homerow button svg, .rightcol button svg { width: 20px; height: 20px; color: #000; }
.homerow { flex: none; display: flex; height: 28px; margin: 3px 0 0 1px; }
.homerow button { width: 141px; height: 27px; margin-right: 8px; }
.homerow .go { height: 26px; }
.homerow label { width: 141px; text-align: right; line-height: 28px; }
.abs { width: 143px; margin: 2px 0 0 7px; color: #123d12; }
.lower { display: flex; height: 111px; flex: none; }
.checks { width: 299px; padding-top: 35px; letter-spacing: .03px; }
.checks span { display: flex; align-items: center; height: 22px; }
.checks .oc { margin-top: 7px; }
.offc { color: #888; }
.job { display: flex; height: 55px; }
.job label { width: 142px; text-align: right; line-height: 56px; margin-right: 8px; }
.job svg { width: 140px; height: 54px; }
.rightcol button { width: 290px; height: 27px; margin-bottom: 2px; letter-spacing: .02px; }
.devrow { display: flex; flex: none; height: 27px; padding-left: 1px; margin-top: 2px; }
.devrow button { width: 91px; height: 26px; }
.devrow .combo { margin-top: 2px; height: 23px; }
.devrow .auto { width: 243px; margin-left: 7px; }
.devrow .rui { width: 242px; margin-left: 6px; }
.tabs.bot { margin-top: 55px; }
.tabs.bot .act { width: 61px; height: 24px; }
.tabs.bot span:last-child { width: 66px; border-right: 0; }

.palette { flex: none; height: 34px; border-top: 2px solid #fff; display: flex; align-items: center; padding-bottom: 3px; font: 12.5px "Liberation Sans", sans-serif; letter-spacing: -.3px; }
.palette .grip { height: 26px; margin-right: 5px; }
.cell { width: 26px; height: 28px; display: grid; place-items: center; padding-bottom: 1px; }
.cell span { width: 22px; height: 22px; line-height: 22px; text-align: center; }
.cell.pick { background: #b9dcf5; border: 1px solid #90c8f0; padding: 1px 0 0 1px; }
.statusbar { flex: none; height: 24px; line-height: 26px; padding-left: 2px; display: flex; letter-spacing: -.1px; }
.xy { width: 158px; } .mm { width: 481px; border-right: 1px solid #ccc; }

.taskbar { flex: none; height: 50px; background: #1c1c1c; display: flex; color: #fff; }
.taskbar > span { width: 62px; display: grid; place-items: center; position: relative; }
.taskbar > .w60 { width: 60px; } .taskbar > .gap { margin-right: 3px; }
.taskbar > span svg { width: 30px; height: 30px; }
.run::after { content: ""; position: absolute; bottom: 0; left: 6px; width: 51px; height: 3px; background: #f598a5; }
.run.two::after { background: linear-gradient(90deg, #f598a5 40px, #b97682 40px); }
.taskbar > .live { background: linear-gradient(90deg, #4a4a4a 57px, #333 57px 61px, transparent 61px) 1px 0 no-repeat; }
.run.live::after { left: 1px; width: 61px; }
.ai { font: bold 15px "Open Sans", sans-serif; fill: #ff9a00; text-anchor: middle; }
.tray { margin-left: auto; display: flex; align-items: center; font: 14px "Open Sans", sans-serif; letter-spacing: -.3px; border-right: 1px solid #777; margin-right: 5px; }
.icons { width: 190px; height: 50px; }
.eng { margin-left: 6px; width: 44px; }
.clock { display: flex; flex-direction: column; width: 76px; text-align: center; line-height: 23.5px; }
.note { width: 50px; height: 50px; margin-left: 12px; margin-right: 7px; }
.note text { font: bold 13px "Open Sans", sans-serif; text-anchor: middle; fill: #fff; }
```
FILE: script.js
```js
const colours = ['#000000', '#0000ff', '#ff0000', '#00e000', '#d0d000', '#ff8000', '#00e0e0', '#ff00ff', '#b4b4b4', '#0000a0', '#a00000', '#00a000', '#a0a000', '#c08000', '#00a0ff', '#a000a0', '#808080', '#7d87b9', '#bb7784', '#4a6fe3', '#d33f6a', '#8cd78c', '#f0b98d', '#f6c4e1', '#fa9ed4', '#500a78', '#b45a00', '#004754', '#86fa88', '#ffdb66'];
const lightText = [0, 1, 2, 7, 9, 10, 11, 14, 15, 19, 20, 25, 26, 27];
const pad = n => String(n).padStart(2, '0');
const ink = n => lightText.includes(n) ? '#ffffff' : '#222222';

// Layer table rows
let rows = '';
for (let i = 0; i <= 10; i++) {
  const bg = i === 8 ? '#7f9fbf' : colours[i];
  rows += `<div class="lrow${i === 8 ? ' cur' : ''}"><span class="id">C${pad(i)}</span><span class="sw" style="background:${bg};color:${ink(i)}">${pad(i)}</span><span class="combo">Line<svg class="chev"><use href="#chev"/></svg></span><span class="sp">100.0 / 100.0</span><svg class="tg"><use href="#on"/></svg><svg class="tg s2"><use href="#on"/></svg><svg class="tg s3"><use href="#on"/></svg></div>`;
}
document.getElementById('layers').insertAdjacentHTML('beforeend', rows);

// Colour palette
let cells = colours.map((c, i) => `<div class="cell${i === 12 ? ' pick' : ''}"><span style="background:${c};color:${ink(i)}">${pad(i)}</span></div>`).join('');
cells += '<i class="sep"></i><div class="cell"><span style="background:#f36926;color:#222">T1</span></div><div class="cell"><span style="background:#0c96d9;color:#fff">T2</span></div>';
document.getElementById('palette').insertAdjacentHTML('beforeend', cells);

// Workspace: rulers, plate and test squares
let g = '';
for (let k = 0; k <= 22; k++) {
  const x = Math.round(94 + k * 54.5) + .5;
  g += `<path class="gl" d="M${x} 147V966"/><text class="rul" x="${x - .5}" y="166">${1000 - k * 10}</text><text class="rul" x="${x - .5}" y="961">${1000 - k * 10}</text>`;
}
for (let k = 0; k <= 14; k++) {
  const y = Math.round(169.7 + k * 54.5) + .5;
  g += `<path class="gl" d="M70 ${y}H1318"/><text class="rul" x="85.500" y="${y + 5.5}">${520 + k * 10}</text><text class="rul" x="1303.500" y="${y + 5.5}">${520 + k * 10}</text>`;
}
g += '<rect x="265.500" y="278.500" width="899" height="654" rx="18" stroke="#111"/><circle cx="292.500" cy="308.500" r="14" stroke="#111"/><circle cx="1137.500" cy="308.500" r="14" stroke="#111"/>';
const heading = (t, x, y, w) => `<text class="outl h" x="${x}" y="${y}" textLength="${w}" lengthAdjust="spacingAndGlyphs">${t}</text>`;
g += heading('Material: Cardboard', 342.5, 339.5, 290) + heading('Thickness: 3 mm', 827, 339.5, 249) + heading('Cutting', 476, 845.5, 107) + heading('Engraving (fill)', 864, 845.5, 215);
g += '<text class="outl n" x="284" y="388" textLength="73" lengthAdjust="spacingAndGlyphs">POWER</text><text class="outl n" transform="translate(303 581) rotate(-90)" textLength="66" lengthAdjust="spacingAndGlyphs">SPEED</text>';
const blocks = [
  { xs: [359.5, 434.5, 509.5, 580.5, 651.5], mids: [386.5, 459.5, 533.5, 607.5, 681.5], end: 342.5, speeds: [10, 25, 40, 60, 80, 100], cols: ['#2020c8', '#e02828', '#22c822', '#d0d020', '#f09030', '#20dada'] },
  { xs: [794.5, 869.5, 944.5, 1015.5, 1086.5], mids: [821, 894.5, 968.5, 1042.5, 1116.5], end: 780.5, speeds: [80, 100, 200, 300, 400, 500], cols: ['#e030e0', '#bcbcbc', '#1818a0', '#a01818', '#18a018', '#a8a828'] }
];
const powers = [10, 25, 50, 75, 100];
blocks.forEach((b, n) => {
  powers.forEach((p, i) => { g += `<text class="outl n" x="${b.mids[i]}" y="389" text-anchor="middle">${p}</text>`; });
  b.speeds.forEach((s, r) => {
    g += `<text class="outl n" x="${b.end}" y="${433 + r * 70.1}" text-anchor="end">${s}</text>`;
    b.xs.forEach((x, c) => {
      const dash = n === 1 && r === 1 && c === 1 ? ' stroke-dasharray="12 4"' : '';
      g += `<rect x="${x}" y="${Math.round(396.7 + r * 70.9) + .5}" width="55" height="54" stroke="${b.cols[r]}"${dash}/>`;
    });
  });
});
// Selection handles
for (const x of [863, 896, 929]) for (const y of [462, 495, 528]) g += `<path d="M${x - 4.5} ${y - 4.5}h9v9h-9z" fill="#929292"/>`;
const arc = '<path d="M851.500 467C848 456 856 448.500 865 450.500" stroke="#777" stroke-width="2"/><path d="M848.500 463l6.500 2-2 5zM862 447l6 4-6 2z" fill="#777"/>';
g += arc + `<g transform="translate(1792 0) scale(-1 1)">${arc}</g><g transform="translate(0 990) scale(1 -1)">${arc}</g><g transform="translate(1792 990) scale(-1 -1)">${arc}</g>`;
document.getElementById('stage').innerHTML = g;
```
